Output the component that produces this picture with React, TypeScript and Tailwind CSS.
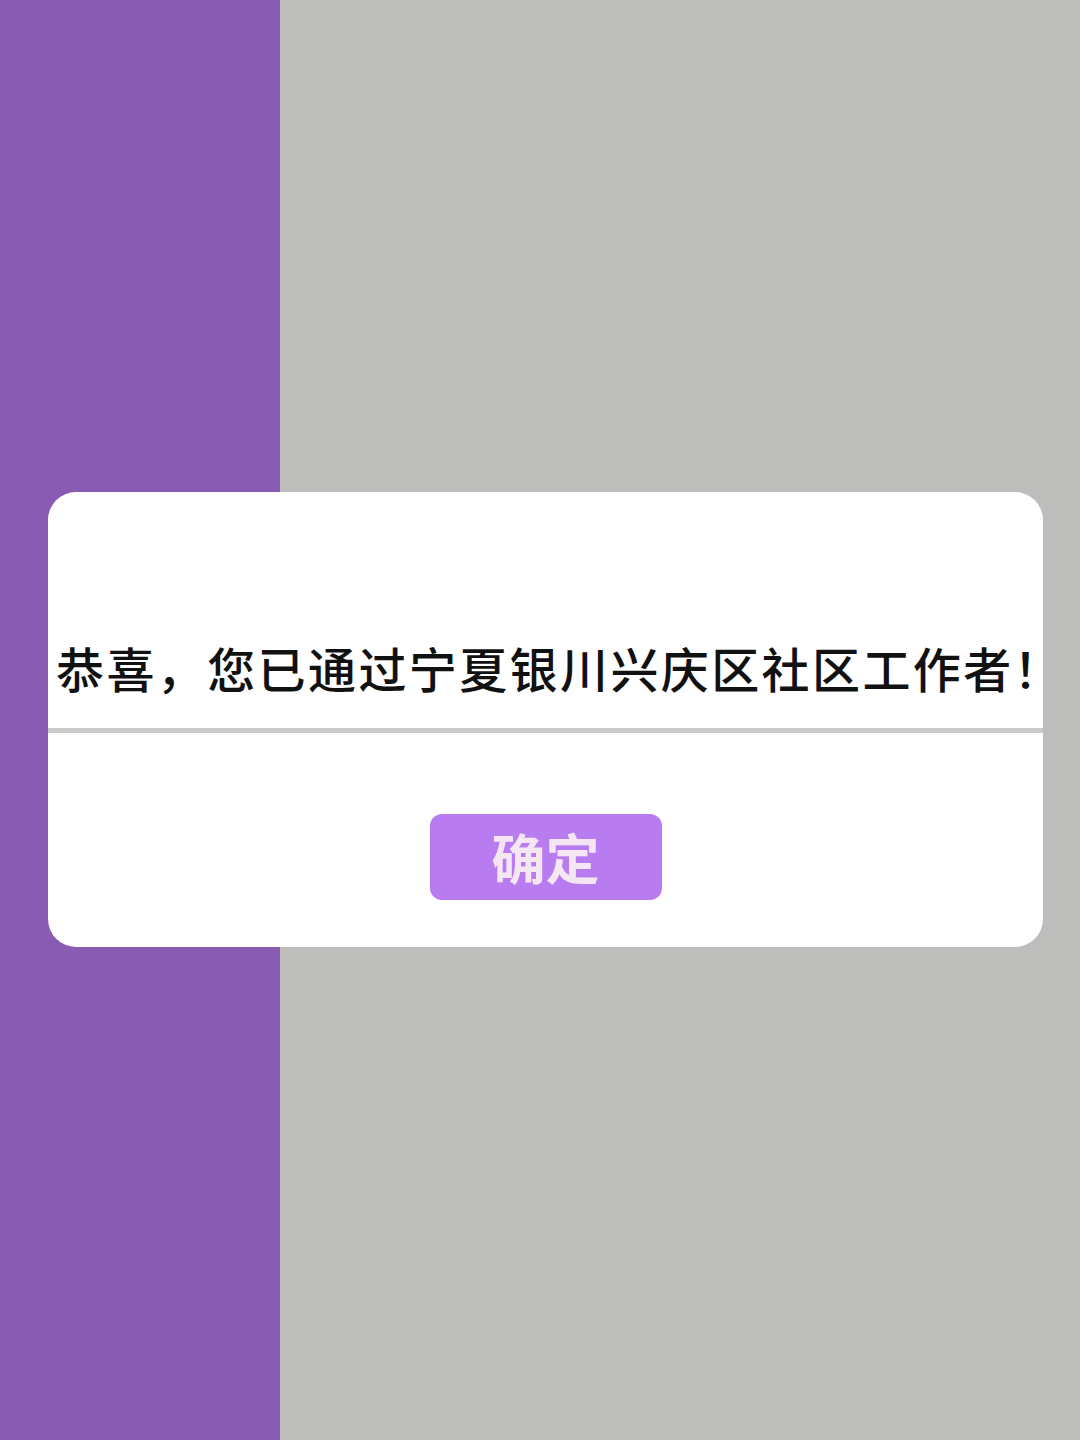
import React from "react";

export default function App() {
  return (
    <div className="relative w-[1080px] h-[1440px] flex overflow-hidden" style={{ fontFamily: '"Noto Sans CJK SC", "Noto Sans", sans-serif' }}>
      <div className="w-[280px] h-full bg-[#8a5bb3]" />
      <div className="flex-1 h-full bg-[#bdbdbc]" />

      <div className="absolute left-[48px] top-[492px] w-[995px] h-[455px] bg-white rounded-[28px] flex flex-col">
        <div className="pt-[151px] pb-[37px] pl-[8px] flex justify-start">
          <h1 className="text-[48px] leading-[48px] font-medium text-[#111111] whitespace-nowrap tracking-[2.4px]">
            恭喜，您已通过宁夏银川兴庆区社区工作者！
          </h1>
        </div>
        <div className="h-[5px] bg-[#c9c9c9]" />
        <div className="pt-[81px] flex justify-center">
          <button className="w-[232px] h-[86px] rounded-[12px] bg-[#b97bf0] text-[#f5e6f4] text-[54px] leading-none font-semibold flex items-center justify-center">
            确定
          </button>
        </div>
      </div>
    </div>
  );
}
